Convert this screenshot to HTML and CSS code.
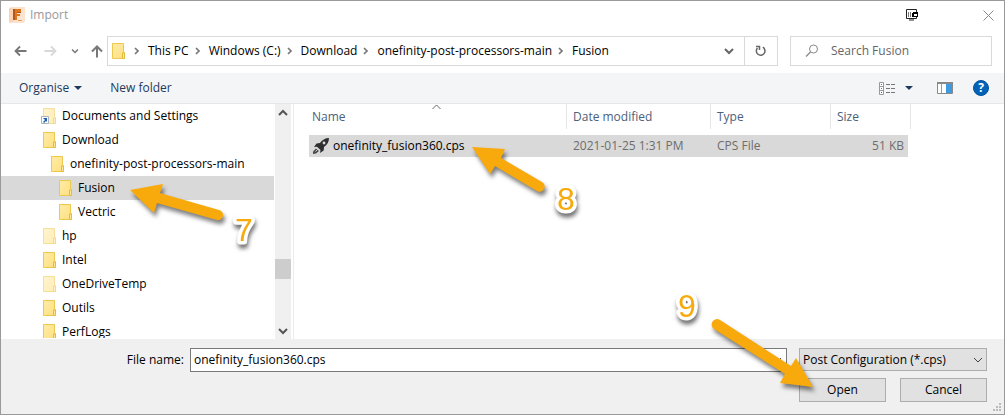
FILE: index.html
```html
<!DOCTYPE html>
<html lang="en">
<head>
<meta charset="utf-8">
<title>Import</title>
<link rel="stylesheet" href="styles.css">
</head>
<body>
<svg class="defs" width="0" height="0" aria-hidden="true">
  <defs>
    <linearGradient id="fold" x1="0" y1="0" x2="1" y2="1"><stop offset="0" stop-color="#ffeca6"/><stop offset="1" stop-color="#ffdf80"/></linearGradient>
    <symbol id="folder" viewBox="0 0 14 16">
      <path d="M.5.5h11v9h1v6H.5z" fill="url(#fold)" stroke="#ecc84d"/>
      <path d="M10.500 15.500v-5.500h2v5.500z" fill="#ffe999" stroke="#e3bb3e"/>
    </symbol>
    <symbol id="chev" viewBox="0 0 6 8"><path d="M1 1l3 3-3 3" fill="none" stroke="#777" stroke-width="1.700"/></symbol>
    <symbol id="down" viewBox="0 0 10 8"><path d="M1 2l4 4 4-4" fill="none" stroke="currentColor" stroke-width="var(--w,2)"/></symbol>
  </defs>
</svg>
<main class="dialog">
  <header class="title">
    <svg class="app" width="16" height="16" viewBox="0 0 16 16"><path d="M0 1l2-1h14v14l-1 2H0z" fill="#fce3cf"/><path d="M0 1h4v14H0z" fill="#fbd3b2"/><path d="M4 2h8v3H8v2h3v2H8v4H4z" fill="#dd761d"/><path d="M4 2h2v11H4z" fill="#b5571a"/><path d="M8 5h4v1H8z" fill="#a8521c"/><path d="M9 13h4v1H9z" fill="#ee9a51"/></svg>
    <h1>Import</h1>
    <span class="grow"></span>
    <button class="plain" aria-label="Display">
      <svg width="12" height="12" viewBox="0 0 12 12"><path d="M.5.5h10v9H.5z" fill="#fff" stroke="#222"/><path d="M3 11h5" stroke="#222"/><path d="M2.500 3v5M4.500 3v5" stroke="#777"/><path d="M6 4h1V3h5v5H6z" fill="#000"/><path d="M8 5h3v2H8z" fill="#fff"/></svg>
    </button>
    <button class="plain close" aria-label="Close">
      <svg width="11" height="11" viewBox="0 0 11 11"><path d="M.5.5l10 10M10.500.5l-10 10" stroke="#888"/></svg>
    </button>
  </header>

  <nav class="address">
    <div class="moves">
      <button class="plain" aria-label="Back"><svg width="13" height="12" viewBox="0 0 13 12"><path d="M12.500 6H1.500M6 1.500L1.500 6 6 10.500" fill="none" stroke="#777" stroke-width="1.800"/></svg></button>
      <button class="plain next" aria-label="Forward"><svg width="13" height="12" viewBox="0 0 13 12"><path d="M.5 6h11M7 1.500L11.500 6 7 10.500" fill="none" stroke="#d8d8d8" stroke-width="1.800"/></svg></button>
      <button class="plain recent" aria-label="Recent locations"><svg width="8" height="6" viewBox="0 0 10 8"><use href="#down"/></svg></button>
      <button class="plain" aria-label="Up"><svg width="12" height="13" viewBox="0 0 12 13"><path d="M6 12.500V1.500M1 6.500l5-5 5 5" fill="none" stroke="#777" stroke-width="2"/></svg></button>
    </div>
    <div class="path">
      <svg class="folder" width="14" height="16"><use href="#folder"/></svg>
      <ol>
        <li><svg width="6" height="8"><use href="#chev"/></svg><a href="#">This PC</a></li>
        <li><svg width="6" height="8"><use href="#chev"/></svg><a href="#">Windows (C:)</a></li>
        <li><svg width="6" height="8"><use href="#chev"/></svg><a href="#">Download</a></li>
        <li><svg width="6" height="8"><use href="#chev"/></svg><a href="#">onefinity-post-processors-main</a></li>
        <li><svg width="6" height="8"><use href="#chev"/></svg><a href="#">Fusion</a></li>
      </ol>
      <button class="plain history" aria-label="Previous locations"><svg width="10" height="8"><use href="#down"/></svg></button>
      <button class="plain refresh" aria-label="Refresh"><svg width="12" height="12" viewBox="0 0 12 12"><path d="M7.800 2.200A4.300 4.300 0 1 1 2.500 3" fill="none" stroke="#666" stroke-width="1.500"/><path d="M1 1.500h3.500V5" fill="none" stroke="#666" stroke-width="1.500"/></svg></button>
    </div>
    <label class="search">
      <svg width="14" height="14" viewBox="0 0 14 14"><circle cx="8.500" cy="5" r="4" fill="none" stroke="#888"/><path d="M5.500 8L1 12.500" stroke="#888" stroke-width="1.200"/></svg>
      <input type="text" placeholder="Search Fusion" aria-label="Search Fusion">
    </label>
  </nav>

  <div class="toolbar">
    <button class="plain">Organise <i class="caret"></i></button>
    <button class="plain">New folder</button>
    <span class="grow"></span>
    <button class="plain view" aria-label="Change view">
      <svg width="17" height="13" viewBox="0 0 17 13"><path d="M.5.5h4v12h-4zM.5 4.500h4M.5 8.500h4" fill="#fff" stroke="#999"/><path d="M2 2h1v1H2z" fill="#2a84c8"/><path d="M2 6h1v1H2z" fill="#46915b"/><path d="M2 10h1v1H2z" fill="#c33"/><path d="M7 2.500h4m1 0h4M7 6.500h4m1 0h4M7 10.500h4m1 0h4" stroke="#777"/></svg>
      <i class="caret"></i>
    </button>
    <button class="plain" aria-label="Preview pane"><svg width="16" height="12" viewBox="0 0 16 12"><path d="M.5.5h15v11H.5z" fill="#fff" stroke="#888"/><path d="M0 0h16v2H0z" fill="#888"/><path d="M4.500 2v9" stroke="#999"/><path d="M9 2h6v9H9z" fill="#3f9ae0"/></svg></button>
    <button class="plain help" aria-label="Help">?</button>
  </div>

  <div class="content">
    <div class="side">
      <ul class="tree">
        <li class="dim"><svg class="folder" width="14" height="16"><use href="#folder"/></svg>Documents and Settings
          <svg class="link" width="8" height="8" viewBox="0 0 8 8"><path d="M.5.5h7v7h-7z" fill="#fff" stroke="#a9b4c2"/><path d="M2 2h4v4L5 5 3 7 2 6l2-2z" fill="#1d5fae"/></svg></li>
        <li><svg class="folder" width="14" height="16"><use href="#folder"/></svg>Download</li>
        <li class="l2"><svg class="folder" width="14" height="16"><use href="#folder"/></svg>onefinity-post-processors-main</li>
        <li class="l3 on"><svg class="folder" width="14" height="16"><use href="#folder"/></svg>Fusion</li>
        <li class="l3"><svg class="folder" width="14" height="16"><use href="#folder"/></svg>Vectric</li>
        <li class="dim"><svg class="folder" width="14" height="16"><use href="#folder"/></svg>hp</li>
        <li><svg class="folder" width="14" height="16"><use href="#folder"/></svg>Intel</li>
        <li class="dim"><svg class="folder" width="14" height="16"><use href="#folder"/></svg>OneDriveTemp</li>
        <li><svg class="folder" width="14" height="16"><use href="#folder"/></svg>Outils</li>
        <li><svg class="folder" width="14" height="16"><use href="#folder"/></svg>PerfLogs</li>
      </ul>
      <div class="scroll">
        <svg class="up" width="10" height="8"><use href="#down"/></svg>
        <span class="thumb"></span>
        <svg width="10" height="8"><use href="#down"/></svg>
      </div>
    </div>
    <section class="files">
      <table>
        <colgroup><col class="c-name"><col class="c-date"><col class="c-type"><col class="c-size"></colgroup>
        <thead><tr><th>Name<svg class="sort" width="9" height="6" viewBox="0 0 9 6"><path d="M.5 5l4-4 4 4" fill="none" stroke="#666"/></svg></th><th>Date modified</th><th>Type</th><th>Size</th></tr></thead>
        <tbody><tr>
          <td class="name"><span><svg width="16" height="16" viewBox="0 0 16 16"><path d="M16 0c-4 0-7 2-9 5L3.500 5.500 1 9l3-.3L7.500 12 7 15l3.700-2.500L11 9c3-2 5-5 5-9z" fill="#2f2f2f"/><path d="M3 10.500L0 13.500V16l3-.5 3-2.500z" fill="#4a4a4a"/><path d="M2.500 13.500l2-2" stroke="#d9d9d9"/><circle cx="11" cy="5" r="1.400" fill="#d9d9d9"/></svg>onefinity_fusion360.cps</span></td>
          <td>2021-01-25 1:31 PM</td><td>CPS File</td><td class="size">51 KB</td>
        </tr></tbody>
      </table>
    </section>
  </div>

  <footer class="foot">
    <div class="row">
      <label class="fname" for="file">File name:</label>
      <div class="combo"><input id="file" type="text" value="onefinity_fusion360.cps"><svg width="10" height="8"><use href="#down"/></svg></div>
      <div class="filter"><select aria-label="File type"><option>Post Configuration (*.cps)</option></select><svg width="10" height="8"><use href="#down"/></svg></div>
    </div>
    <div class="row actions">
      <button class="btn">Open</button>
      <button class="btn">Cancel</button>
    </div>
    <svg class="grip" width="8" height="8" viewBox="0 0 8 8"><path d="M6 0h2v2H6zM3 3h2v2H3zM6 3h2v2H6zM0 6h2v2H0zM3 6h2v2H3zM6 6h2v2H6z" fill="#bbb"/></svg>
  </footer>

  <svg class="notes" width="1005" height="415" viewBox="0 0 1005 415">
    <g class="arrow">
      <path d="M130 190L163 184L160 193L219 210A5 5 0 0 1 217 220L157 203L154 213Z"/>
      <path d="M472 147L505 149L501 158L542 182A5 5 0 0 1 537 191L495 166L490 174Z"/>
      <path d="M813 387L796 358L791 366L720 320A5 5 0 0 0 714 329L785 374L780 383Z"/>
    </g>
    <g class="halo" aria-hidden="true">
      <text x="235" y="241">7</text>
      <text x="557" y="210">8</text>
      <text x="678" y="317">9</text>
    </g>
  </svg>
</main>
</body>
</html>
```

FILE: styles.css
```css
* { box-sizing: border-box; }
body {
  margin: 0;
  font: 12px/16px "Open Sans", "Noto Sans", sans-serif;
  color: #000;
}
.defs { position: absolute; }
svg { display: block; flex: none; }
button, input, select { font: inherit; color: inherit; }
.plain { border: 0; padding: 0; background: none; display: flex; align-items: center; }
.grow { flex: 1; }

.dialog {
  position: relative;
  display: flex;
  flex-direction: column;
  min-height: 100vh;
  overflow: hidden;
  border: 1px solid #999;
  background: #fff;
}

.title { display: flex; align-items: center; height: 28px; padding: 0 10px 0 8px; }
.title h1 { margin: 0 0 0 5px; font-size: 12px; font-weight: 400; color: #999; }
.close { margin-left: 65px; }

.address { display: flex; height: 44px; padding: 7px 12px 7px 13px; }
.moves { display: flex; align-items: center; width: 93px; color: #777; }
.moves .next { margin-left: 17px; }
.moves .recent { margin: 0 12px 0 14px; }
.path { display: flex; flex: 1; align-items: center; border: 1px solid #d9d9d9; padding-left: 4px; min-width: 0; }
.path ol { display: flex; flex: 1; margin: 0; padding: 0 0 0 8px; list-style: none; min-width: 0; }
.path li { display: flex; align-items: center; gap: 8px; margin-right: 6px; white-space: nowrap; }
.path a { color: inherit; text-decoration: none; }
.history { color: #666; margin-right: 10px; }
.refresh { align-self: stretch; width: 33px; justify-content: center; border-left: 1px solid #d9d9d9; }
.search { display: flex; align-items: center; width: 202px; margin-left: 12px; padding-left: 14px; border: 1px solid #d9d9d9; }
.search input { flex: 1; min-width: 0; margin-left: 12px; padding: 0; border: 0; outline: 0; background: none; }
.search input::placeholder { color: #666; opacity: 1; }

.toolbar {
  display: flex;
  align-items: center;
  height: 31px;
  padding: 0 15px 0 18px;
  background: #f4f5f7;
  border-bottom: 1px solid #e6e7e9;
  color: #1e395b;
}
.toolbar .plain + .plain { margin-left: 24px; }
.toolbar .plain:nth-child(2) { margin-left: 28px; }
.caret { border: 4px solid transparent; border-top-color: #1e395b; border-bottom: 0; margin-left: 5px; }
.view .caret { margin-left: 9px; }
.toolbar .plain.help {
  justify-content: center;
  width: 16px;
  height: 16px;
  margin-left: 20px;
  border-radius: 50%;
  background: #0063b8;
  border: 1px solid #00519b;
  color: #fff;
  font-weight: 700;
}

.content { display: flex; flex: 1 0 234px; height: 234px; }
.side { display: flex; width: 293px; border-right: 1px solid #ececec; padding-right: 2px; }
.tree { flex: 1; height: 234px; overflow: hidden; margin: 0; padding: 0; list-style: none; }
.tree li { position: relative; display: flex; align-items: center; gap: 5px; height: 24px; margin-right: 1px; padding-left: 42px; white-space: nowrap; }
.tree .l2 { padding-left: 50px; }
.tree .l3 { padding-left: 58px; }
.tree .on { background: #d9d9d9; }
.dim .folder { opacity: .55; }
.tree .link { position: absolute; left: 40px; bottom: 4px; }
.scroll { display: flex; flex-direction: column; align-items: center; justify-content: space-between; width: 16px; padding: 5px 0 4px; background: #f0f0f0; color: #555; }
.scroll .up { transform: rotate(180deg); }
.thumb { width: 16px; height: 20px; margin-top: auto; margin-bottom: 48px; background: #cdcdcd; }

.files { flex: 1; padding-left: 15px; }
table { table-layout: fixed; width: 602px; border-spacing: 0; }
.c-name { width: 258px; }
.c-date { width: 144px; }
.c-type { width: 120px; }
.c-size { width: 80px; }
th { position: relative; height: 25px; padding: 0 0 0 6px; border-right: 1px solid #e5e5e5; text-align: left; font-weight: 400; color: #4c607a; }
th:first-child { padding-left: 3px; }
.sort { position: absolute; left: 123px; top: 0; }
tbody::before { content: ""; display: block; height: 6px; }
td { height: 22px; padding: 0 0 0 6px; background: #d9d9d9; color: #6d6d6d; white-space: nowrap; }
td.name { padding-left: 4px; color: #000; }
.name span { display: flex; align-items: center; gap: 4px; }
td.size { padding-right: 4px; border-right: 3px solid #fff; text-align: right; }

.foot { position: relative; padding: 9px 17px 12px; background: #f0f0f0; }
.row { display: flex; }
.fname { width: 189px; margin-left: -17px; padding-right: 6px; text-align: right; line-height: 24px; }
.combo { display: flex; align-items: center; flex: 1; height: 24px; margin-left: 0; padding-right: 4px; border: 1px solid #7a7a7a; background: #fff; color: #555; --w: 1; }
.combo input { flex: 1; min-width: 0; padding: 0 0 0 3px; border: 0; outline: 0; background: none; color: #000; }
.filter { position: relative; width: 188px; margin-left: 12px; color: #444; --w: 1; }
.filter select { width: 100%; height: 23px; padding: 0 20px 0 3px; appearance: none; border: 1px solid #adadad; border-radius: 0; background: #e1e1e1; color: #000; }
.filter svg { position: absolute; right: 4px; top: 8px; pointer-events: none; }
.actions { justify-content: flex-end; gap: 14px; margin: 6px 0 0; }
.btn { width: 87px; height: 24px; padding: 0; border: 1px solid #adadad; background: #e1e1e1; }
.grip { position: absolute; right: 3px; bottom: 3px; }

.notes { position: absolute; left: -1px; top: -1px; pointer-events: none; }
.arrow { fill: #f8aa0c; filter: drop-shadow(2px 4px 2px rgba(0, 0, 0, .5)); }
.halo { font: 32px "Liberation Sans", Arial, sans-serif; fill: #f8aa0c; stroke: #fff; stroke-width: 7px; stroke-linejoin: round; paint-order: stroke; filter: drop-shadow(1px 4px 2px rgba(0, 0, 0, .55)); }
```
